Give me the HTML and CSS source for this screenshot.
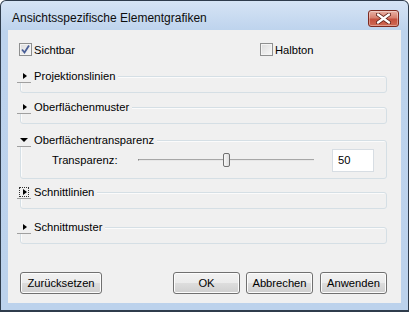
FILE: index.html
```html
<!DOCTYPE html>
<html lang="de">
<head>
<meta charset="utf-8">
<link rel="stylesheet" href="styles.css">
</head>
<body>
<div class="window">
  <div class="titlebar">
    <span class="title">Ansichtsspezifische Elementgrafiken</span>
    <span class="close"><svg width="15" height="11" viewBox="0 0 15 11"><path d="M2 1.5 L13 9.5 M13 1.5 L2 9.5" stroke="#5a1a12" stroke-width="4" stroke-linecap="round"/><path d="M2 1.5 L13 9.5 M13 1.5 L2 9.5" stroke="#fff" stroke-width="2.4" stroke-linecap="round"/></svg></span>
  </div>
  <div class="client">
    <div class="checks">
      <label class="check first"><span class="box"><svg width="11" height="11" viewBox="0 0 11 11"><path d="M2 5.5 L4.5 8.5 L9 1.5" fill="none" stroke="#4a5f97" stroke-width="1.8"/></svg></span>Sichtbar</label>
      <label class="check"><span class="box"></span>Halbton</label>
    </div>

    <div class="group g1">
      <div class="ghead"><span class="toggle"><span class="tri-r"></span></span><span class="glabel">Projektionslinien</span></div>
      <div class="frame"></div>
    </div>

    <div class="group g2">
      <div class="ghead"><span class="toggle"><span class="tri-r"></span></span><span class="glabel">Oberflächenmuster</span></div>
      <div class="frame"></div>
    </div>

    <div class="group g3">
      <div class="ghead"><span class="toggle"><span class="tri-d"></span></span><span class="glabel">Oberflächentransparenz</span></div>
      <div class="frame open">
        <span class="lbl">Transparenz:</span>
        <div class="slider"><span class="track"></span><span class="thumb"></span></div>
        <span class="input">50</span>
      </div>
    </div>

    <div class="group g4">
      <div class="ghead"><span class="toggle focus"><span class="tri-r"></span></span><span class="glabel">Schnittlinien</span></div>
      <div class="frame"></div>
    </div>

    <div class="group g5">
      <div class="ghead"><span class="toggle"><span class="tri-r"></span></span><span class="glabel">Schnittmuster</span></div>
      <div class="frame"></div>
    </div>

    <div class="buttons">
      <span class="btn wide">Zurücksetzen</span>
      <span class="spacer"></span>
      <span class="btn">OK</span>
      <span class="btn">Abbrechen</span>
      <span class="btn">Anwenden</span>
    </div>
  </div>
</div>
</body>
</html>
```

FILE: styles.css
```css
html, body {
  margin: 0;
  padding: 0;
  background: #ffffff;
}

.window {
  width: 409px;
  height: 312px;
  box-sizing: border-box;
  border: 1px solid #2f3c4c;
  border-bottom-width: 2px;
  border-radius: 6px 6px 0 0;
  background: linear-gradient(#d6e4f5, #bdd3ed 30px, #bcd2ec);
  padding: 0 7px 7px 7px;
  display: flex;
  flex-direction: column;
  font-family: "Liberation Sans", Arial, sans-serif;
  font-size: 11.2px;
  color: #000;
}

.titlebar {
  height: 29px;
  display: flex;
  align-items: flex-start;
  flex: none;
}

.title {
  font-size: 12px;
  padding-left: 4px;
  padding-top: 10px;
  color: #0d0d0d;
  flex: 1;
}

.close {
  margin-top: 9px;
  margin-right: 2px;
  width: 29px;
  height: 15px;
  border: 1px solid #7d2a20;
  border-radius: 3px;
  background: linear-gradient(#e8b2a6, #d7806f 45%, #c4503e 55%, #cf6a55);
  box-shadow: inset 0 0 0 1px rgba(255,255,255,0.35);
  display: flex;
  align-items: center;
  justify-content: center;
}

.client {
  flex: 1;
  background: #f0f0f0;
  padding: 13px 14px 0 9px;
  display: flex;
  flex-direction: column;
}

.checks {
  display: flex;
  height: 13px;
  padding-left: 2px;
}

.check {
  display: flex;
  align-items: center;
  gap: 2px;
}

.check.first {
  width: 241px;
}

.box {
  width: 11px;
  height: 11px;
  border: 1px solid #8e8f8f;
  background: linear-gradient(135deg, #dcdcdc, #f8f8f8);
  box-shadow: inset 0 0 0 1px #f4f4f4;
  display: flex;
}

.group {
  display: grid;
}

.ghead, .frame {
  grid-area: 1 / 1;
}

.ghead {
  align-self: start;
  justify-self: start;
  display: flex;
  align-items: center;
  height: 14px;
  background: #f0f0f0;
  z-index: 1;
}

.toggle {
  width: 14px;
  height: 13px;
  border-bottom: 1px solid #a0a0a0;
  display: flex;
  align-items: center;
  justify-content: center;
  box-sizing: content-box;
}

.toggle.focus {
  outline: 1px dotted #333;
  outline-offset: -3px;
}

.tri-r {
  width: 0;
  height: 0;
  border-top: 3.5px solid transparent;
  border-bottom: 3.5px solid transparent;
  border-left: 4px solid #000;
  margin-left: 2px;
}

.tri-d {
  width: 0;
  height: 0;
  border-left: 4px solid transparent;
  border-right: 4px solid transparent;
  border-top: 4px solid #000;
}

.glabel {
  padding: 0 3px 0 3px;
}

.frame {
  margin: 7px 0 0 3px;
  height: 15px;
  border: 1px solid #d5dfe5;
  border-radius: 3px;
  box-shadow: inset 1px 1px 0 #fbfbfb;
}

.g1 { margin-top: 13px; }
.g2 { margin-top: 7px; }
.g3 { margin-top: 9px; }
.g4 { margin-top: 6px; }
.g5 { margin-top: 11px; }

.frame.open {
  display: flex;
  align-items: center;
  padding-top: 1px;
  box-sizing: content-box;
  height: 36px;
}

.lbl {
  margin-left: 31px;
  width: 86px;
}

.slider {
  position: relative;
  width: 176px;
  height: 14px;
  display: flex;
  align-items: center;
}

.track {
  width: 100%;
  height: 1px;
  background: #a7a7a7;
  border-bottom: 1px solid #e7e7e7;
  border-left: 1px solid #888;
}

.thumb {
  position: absolute;
  left: 85px;
  top: 0;
  width: 5px;
  height: 12px;
  border: 1px solid #707070;
  border-radius: 2px;
  background: linear-gradient(90deg, #f7f7f7, #dedede);
}

.input {
  margin-left: 18px;
  height: 21px;
  border: 1px solid #d7dde3;
  background: #fff;
  display: flex;
  align-items: center;
  padding-left: 5px;
  box-sizing: content-box;
  width: 35px;
}

.buttons {
  margin-top: 28px;
  display: flex;
  gap: 6px;
  padding-left: 3px;
}

.spacer { flex: 1; }

.btn {
  width: 65px;
  height: 20px;
  border: 1px solid #707070;
  border-radius: 3px;
  background: linear-gradient(#f2f2f2, #ebebeb 50%, #dddddd 51%, #cfcfcf);
  box-shadow: inset 0 0 0 1px #fcfcfc;
  display: flex;
  align-items: center;
  justify-content: center;
}

.btn.wide { width: 80px; }
.btn:last-child { margin-left: 1px; }
```
